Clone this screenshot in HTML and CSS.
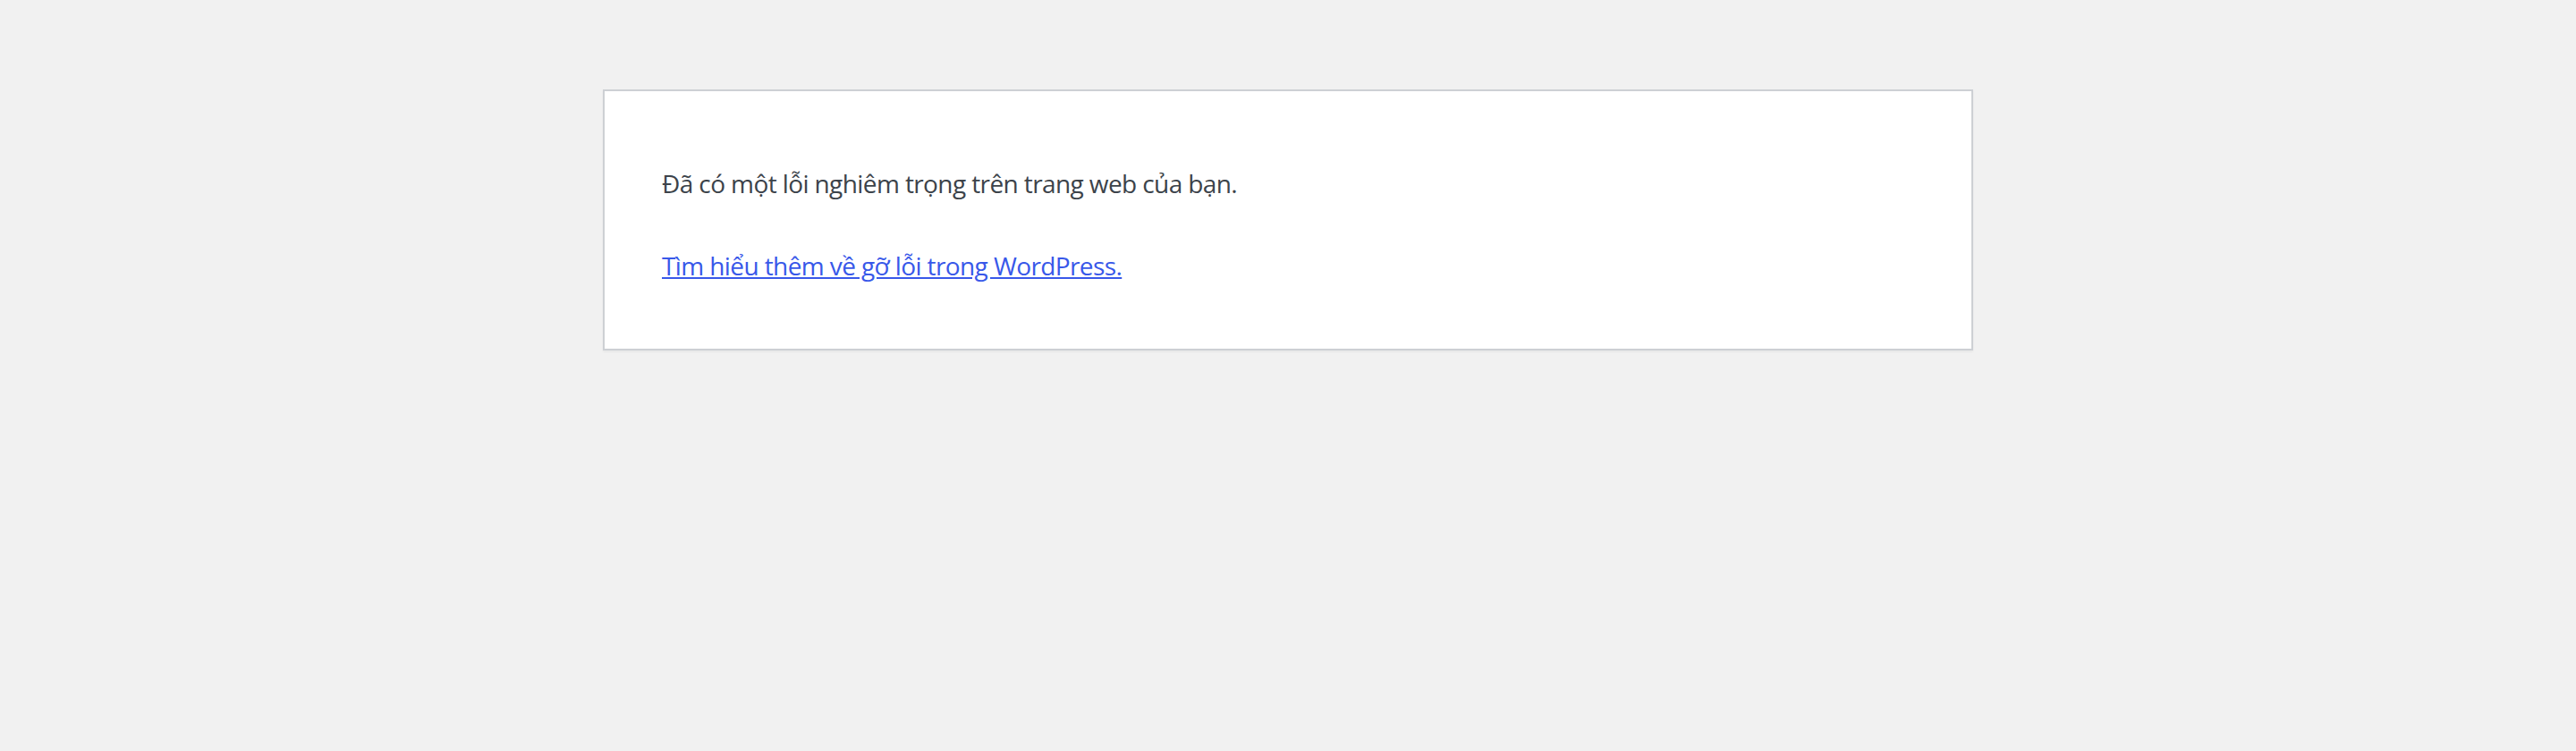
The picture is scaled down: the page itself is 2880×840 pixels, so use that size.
FILE: index.html
```html
<!DOCTYPE html>
<html lang="vi">
<head>
  <meta charset="UTF-8" />
  <title>Lỗi WordPress</title>
  <link rel="stylesheet" href="styles.css">
</head>
<body id="error-page">
  <div class="wp-die-message">
    <p>Đã có một lỗi nghiêm trọng trên trang web của bạn.</p>
    <p><a href="#">Tìm hiểu thêm về gỡ lỗi trong WordPress.</a></p>
  </div>
</body>
</html>
```

FILE: styles.css
```css
html {
  background: #f1f1f1;
}

body {
  background: #fff;
  border: 2px solid #cdd0d4;
  color: #3c434a;
  font-family: 'Open Sans', 'Noto Sans', sans-serif;
  font-size: 32px;
  margin: 100px auto 0;
  padding: 32px 64px;
  max-width: 1400px;
  box-shadow: 0 2px 2px rgba(0, 0, 0, 0.04);
}

#error-page p {
  font-size: 28px;
  line-height: 1.5;
  letter-spacing: -0.6px;
  margin: 50px 0 40px;
}

a {
  color: #3858e9;
}
```
